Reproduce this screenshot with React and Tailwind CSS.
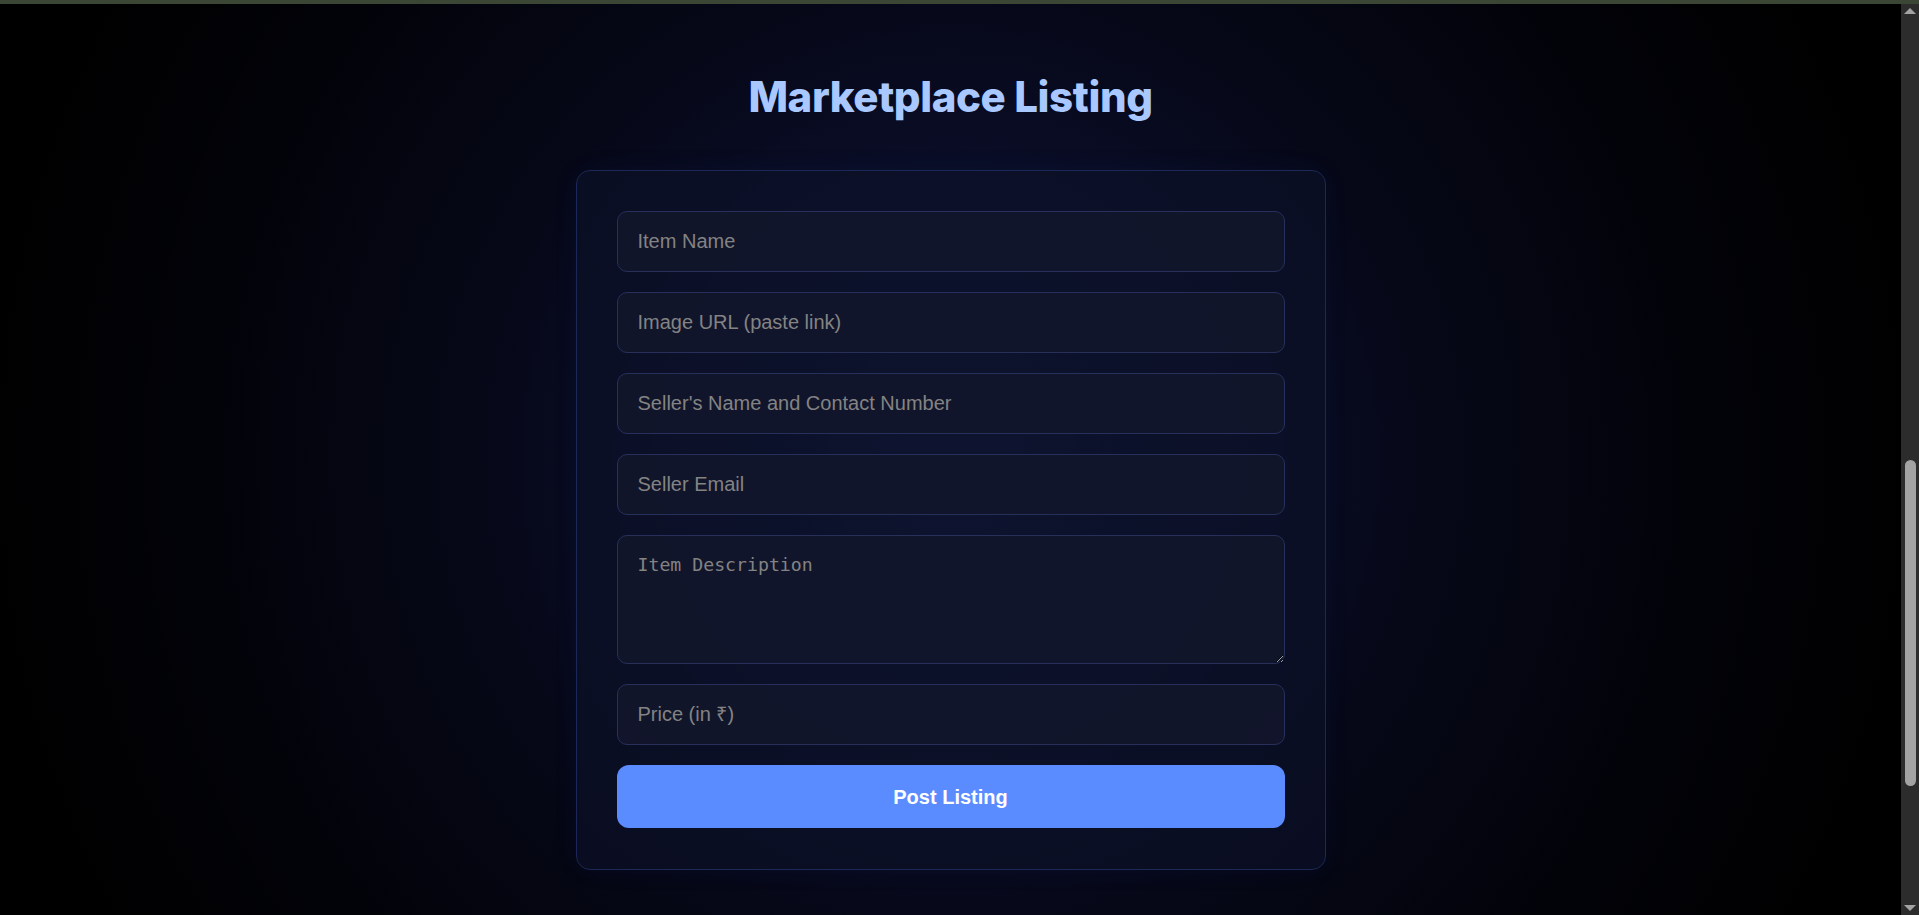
import React from "react";

export default function App() {
  const inputCls =
    "block w-full h-[61px] rounded-[10px] border border-[#26305a] bg-[#13162c]/80 px-5 text-[20px] text-[#d0d4e4] placeholder:text-[#838383] outline-none font-['Liberation_Sans',Arial,sans-serif]";
  return (
    <div className="h-[915px] w-full overflow-hidden flex flex-col bg-black">
      <div className="h-[4px] w-full bg-[#3b4734] shrink-0" />
      <div className="flex flex-1 min-h-0">
        <main className="flex-1 min-w-0 flex flex-col items-center bg-[radial-gradient(circle_at_50%_50%,#10163a_0%,#0a0e28_25%,#060818_45%,#020309_70%,#000000_92%)]">
          <h1 className="mt-[72px] text-[42px] leading-none font-extrabold text-[#a9c8ff] tracking-[-0.4px] font-['Inter',sans-serif]">
            Marketplace Listing
          </h1>
          <form
            className="mt-[52px] w-[750px] rounded-[14px] border border-[#1c2855] bg-[#0e1329]/60 shadow-[0_0_24px_rgba(40,70,160,0.08)] px-10 pt-10 pb-[41px] flex flex-col gap-[20px]"
            onSubmit={(e) => e.preventDefault()}
          >
            <input className={inputCls} placeholder="Item Name" />
            <input className={inputCls} placeholder="Image URL (paste link)" />
            <input className={inputCls} placeholder="Seller's Name and Contact Number" />
            <input className={inputCls} placeholder="Seller Email" />
            <textarea
              className="block w-full h-[129px] rounded-[10px] border border-[#26305a] bg-[#13162c]/80 px-5 pt-[18px] text-[18.2px] leading-[1.2] text-[#d0d4e4] placeholder:text-[#838383] outline-none font-['DejaVu_Sans_Mono',monospace]"
              placeholder="Item Description"
            />
            <input className={inputCls} placeholder="Price (in ₹)" />
            <button
              type="submit"
              className="h-[63px] w-full rounded-[12px] bg-[#5b8cff] text-white text-[20px] font-bold font-['Liberation_Sans',Arial,sans-serif]"
            >
              Post Listing
            </button>
          </form>
        </main>
        <div className="w-[18px] shrink-0 bg-[#2c2c2c] flex flex-col items-center">
          <div className="mt-[4px] h-0 w-0 border-x-[6px] border-x-transparent border-b-[6px] border-b-[#a3a3a3]" />
          <div className="mt-[446px] h-[326px] w-[11px] rounded-full bg-[#a3a3a3]" />
          <div className="mt-auto mb-[4px] h-0 w-0 border-x-[6px] border-x-transparent border-t-[6px] border-t-[#a3a3a3]" />
        </div>
      </div>
    </div>
  );
}
